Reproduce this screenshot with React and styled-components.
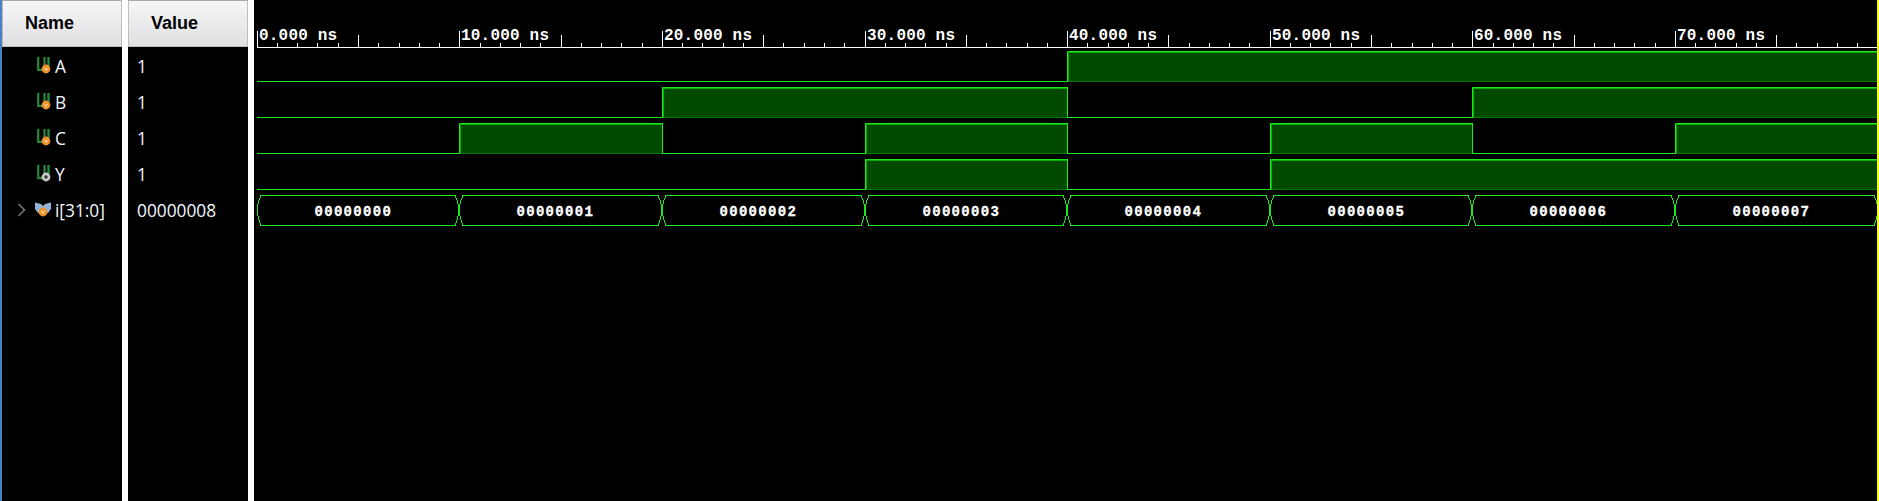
import React from "react";
import styled, { createGlobalStyle } from "styled-components";

const Global = createGlobalStyle`
  html, body { margin: 0; padding: 0; background: #fff; }
  #root { height: 501px; overflow: hidden; }
`;

const Page = styled.div`
  display: flex;
  width: 1879px;
  height: 501px;
  background: #fff;
  overflow: hidden;
`;
const LeftEdge = styled.div`
  flex: 0 0 2px;
  background: #4a7ec6;
`;
const Column = styled.div`
  flex: 0 0 120px;
  margin-right: 6px;
  background: #000;
  display: flex;
  flex-direction: column;
`;
const Header = styled.div`
  box-sizing: border-box;
  height: 47px;
  border: 1px solid #bdbdbd;
  border-top: 1px solid #a9a9a9;
  background: linear-gradient(#f6f6f6, #e0e0e3);
  font: bold 18px "Liberation Sans", Arial, sans-serif;
  color: #000;
  padding-left: ${(p) => p.$indent}px;
  line-height: 44px;
`;
const Rows = styled.div`
  padding-top: 1px;
  display: flex;
  flex-direction: column;
`;
const Row = styled.div`
  height: 36px;
  display: flex;
  align-items: center;
  font: 17.3px "Open Sans", sans-serif;
  color: #f2f8ff;
  white-space: nowrap;
  padding-left: ${(p) => p.$indent}px;
`;
const Chevron = styled.svg`
  flex: 0 0 auto;
  width: 10px;
  height: 14px;
  margin-right: 8px;
`;
const IconBox = styled.svg`
  flex: 0 0 auto;
  width: 18px;
  height: 18px;
  margin-right: ${(p) => p.$gap}px;
`;
const WavePane = styled.div`
  flex: 1;
  background: #000;
  border-right: 2px solid #ffff00;
  overflow: hidden;
  display: flex;
`;

const ScalarIcon = ({ pin }) => (
  <IconBox viewBox="0 0 18 18" $gap={1}>
    <path d="M2.2 0v12.8h6.3V0" fill="none" stroke="#24893c" strokeWidth="2.2" />
    <path d="M12.5 0v9" fill="none" stroke="#24893c" strokeWidth="2.4" />
    <circle cx="10" cy="12" r="4.4" fill={pin === "out" ? "#c8c8c8" : "#f0932b"} />
    {pin === "out" ? (
      <circle cx="10" cy="12" r="1.8" fill="#3a3a3a" />
    ) : (
      <path d="M8.6 10.8l1.4 2.8 1.4-2.8" fill="none" stroke="#ffe3b0" strokeWidth="1" />
    )}
  </IconBox>
);

const BusIcon = () => (
  <IconBox viewBox="0 0 18 18" $gap={2}>
    <path d="M0 1.5l6 1.5 2 2 2-2 6-1.5v6.5l-3 4h-10l-3-4z" fill="#8fb4d4" />
    <circle cx="8" cy="11" r="4.4" fill="#f0932b" />
    <path d="M6.6 9.7l1.4 2.8 1.4-2.8" fill="none" stroke="#ffe3b0" strokeWidth="1" />
  </IconBox>
);

const signals = [
  { name: "A", value: "1", pin: "in" },
  { name: "B", value: "1", pin: "in" },
  { name: "C", value: "1", pin: "in" },
  { name: "Y", value: "1", pin: "out" },
];

const X0 = 2.7;
const STEP = 202.6;
const W = 1623;
const xAt = (i) => Math.round(X0 + i * STEP) + 0.5;

const waves = [
  { low: 81, high: 51, spans: [[4, 8]] },
  { low: 117, high: 87, spans: [[2, 4], [6, 8]] },
  { low: 153, high: 123, spans: [[1, 2], [3, 4], [5, 6], [7, 8]] },
  { low: 189, high: 159, spans: [[3, 4], [5, 8]] },
];

const WHITE = "#fff";
const GREEN = "#1fe81f";

const Ruler = () => {
  const ticks = [];
  for (let i = 0; i <= 79; i++) {
    const x = Math.round(X0 + (i * STEP) / 10) + 0.5;
    const top = i % 10 === 0 ? 31 : i % 5 === 0 ? 35 : 43;
    ticks.push(<line key={i} x1={x} x2={x} y1={top} y2={47} stroke={WHITE} />);
  }
  return (
    <g shapeRendering="crispEdges">
      <line x1={3} x2={W} y1={47.5} y2={47.5} stroke={WHITE} />
      {ticks}
    </g>
  );
};

const Wave = ({ low, high, spans }) => {
  const segs = [];
  let cursor = 0;
  const startOf = (i) => (i === 0 ? 3 : xAt(i));
  spans.forEach(([a, b], i) => {
    const xa = xAt(a);
    const xb = b >= 8 ? W : xAt(b);
    if (a > cursor) {
      segs.push(
        <line key={`l${i}`} x1={startOf(cursor)} x2={xa} y1={low + 0.5} y2={low + 0.5} stroke={GREEN} />
      );
    }
    segs.push(
      <g key={`h${i}`}>
        <rect x={xa} y={high} width={xb - xa} height={low - high} fill="#004a00" />
        <line x1={xa} x2={xb} y1={low + 0.5} y2={low + 0.5} stroke="#007a00" />
        <line x1={xa} x2={xb} y1={high + 1.5} y2={high + 1.5} stroke="#00b000" />
        <line x1={xa} x2={xb} y1={high + 0.5} y2={high + 0.5} stroke={GREEN} />
        <line x1={xa + 1} x2={xa + 1} y1={high} y2={low} stroke="#00b000" />
        <line x1={xa} x2={xa} y1={high} y2={low + 1} stroke={GREEN} />
        {b < 8 && <line x1={xb} x2={xb} y1={high} y2={low + 1} stroke={GREEN} />}
      </g>
    );
    cursor = b;
  });
  if (cursor < 8) {
    segs.push(
      <line key="end" x1={xAt(cursor)} x2={W} y1={low + 0.5} y2={low + 0.5} stroke={GREEN} />
    );
  }
  return <g shapeRendering="crispEdges">{segs}</g>;
};

const busPoints = (a, b) =>
  [
    [a, 210],
    [a + 1.5, 201],
    [a + 4, 195.5],
    [b - 4, 195.5],
    [b - 1.5, 201],
    [b, 210],
    [b - 1.5, 219],
    [b - 4, 225.5],
    [a + 4, 225.5],
    [a + 1.5, 219],
  ]
    .map((p) => p.join(","))
    .join(" ");

const WaveChart = () => (
  <svg width={W} height={501} viewBox={`0 0 ${W} 501`} style={{ display: "block" }}>
    <Ruler />
    <g fontFamily="'Liberation Mono', monospace" fontWeight="bold" fill={WHITE} letterSpacing="0.2">
      {Array.from({ length: 8 }, (_, i) => (
        <text key={i} x={xAt(i) + 1.5} y={40} fontSize="16">
          {`${i * 10 === 0 ? "0" : i * 10}.000 ns`}
        </text>
      ))}
    </g>
    {waves.map((w, i) => (
      <Wave key={i} {...w} />
    ))}
    <g fill="none" stroke={GREEN} shapeRendering="crispEdges">
      {Array.from({ length: 8 }, (_, i) => (
        <polygon key={i} points={busPoints(xAt(i) - 0.5, xAt(i + 1) - 0.5)} />
      ))}
    </g>
    <g
      fontFamily="'Liberation Mono', monospace"
      fontWeight="bold"
      fontSize="14"
      letterSpacing="1.3"
      fill={WHITE}
      stroke={WHITE}
      strokeWidth="0.3"
    >
      {Array.from({ length: 8 }, (_, i) => (
        <text key={i} x={xAt(i) + 57} y={216}>
          {`0000000${i}`}
        </text>
      ))}
    </g>
  </svg>
);

export default function App() {
  return (
    <Page>
      <Global />
      <LeftEdge />
      <Column>
        <Header $indent={22}>Name</Header>
        <Rows>
          {signals.map((s) => (
            <Row key={s.name} $indent={34}>
              <ScalarIcon pin={s.pin} />
              {s.name}
            </Row>
          ))}
          <Row $indent={15}>
            <Chevron viewBox="0 0 10 14">
              <path d="M1.5 1l6 6-6 6" fill="none" stroke="#777" strokeWidth="1.6" />
            </Chevron>
            <BusIcon />
            i[31:0]
          </Row>
        </Rows>
      </Column>
      <Column>
        <Header $indent={22}>Value</Header>
        <Rows>
          {signals.map((s) => (
            <Row key={s.name} $indent={9}>{s.value}</Row>
          ))}
          <Row $indent={9}>00000008</Row>
        </Rows>
      </Column>
      <WavePane>
        <WaveChart />
      </WavePane>
    </Page>
  );
}
